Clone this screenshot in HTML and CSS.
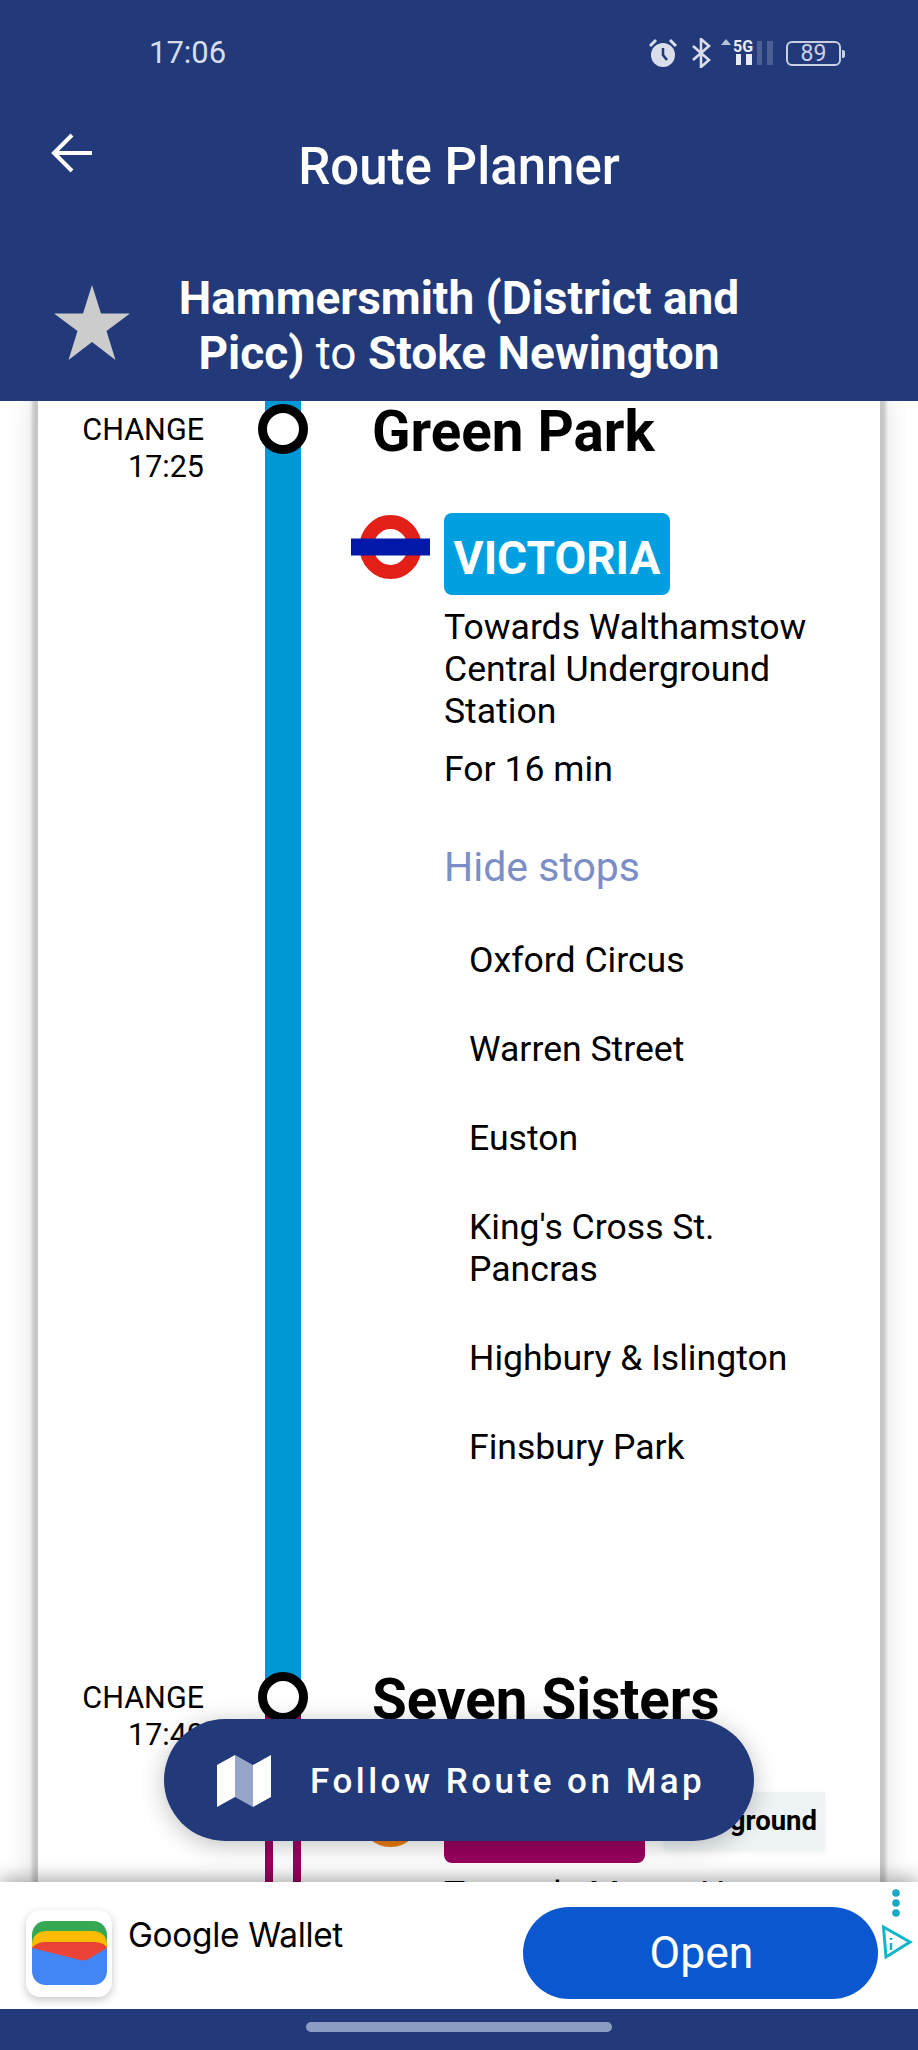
FILE: index.html
```html
<!DOCTYPE html>
<html lang="en">
<head>
<meta charset="utf-8">
<title>Route Planner</title>
<link rel="stylesheet" href="styles.css">
</head>
<body>
<div class="phone">
  <header class="header">
    <div class="status">
      <span class="clock">17:06</span>
      <div class="status-icons">
        <svg class="ic-alarm" viewBox="0 0 28 30" width="28" height="30"><path d="M1 8 7 2M27 8 21 2" stroke="#d9deea" stroke-width="3" fill="none"/><circle cx="14" cy="17" r="12" fill="#d9deea"/><path d="M14 10v7l4 5" stroke="#223a7a" stroke-width="2.5" fill="none"/></svg>
        <svg class="ic-bt" viewBox="0 0 20 30" width="20" height="30"><path d="M2 8 18 22 10 29V1L18 8 2 22" stroke="#d9deea" stroke-width="2.6" fill="none"/></svg>
        <svg class="ic-net" viewBox="0 0 54 28" width="54" height="28"><path d="M0 6 5 0 10 6Z" fill="#b9c3da"/><text x="12" y="13" class="net-label">5G</text><rect x="15" y="15" width="5" height="11" fill="#e8ebf3"/><rect x="25" y="15" width="6" height="11" fill="#e8ebf3"/><rect x="36" y="2" width="5" height="24" fill="#4c6096"/><rect x="46" y="2" width="6" height="24" fill="#4c6096"/></svg>
        <div class="battery"><span class="battery-level">89</span></div>
      </div>
    </div>
    <div class="toolbar">
      <svg class="back" viewBox="0 0 42 40" width="42" height="40"><path d="M41 20H3M21 2 3 20 21 38" stroke="#fff" stroke-width="4" fill="none"/></svg>
      <h1 class="title">Route Planner</h1>
    </div>
    <div class="route">
      <svg class="star" viewBox="0 0 76 75" width="76" height="75"><path d="M38 0 47 28.500H76L52.500 46 61.500 75 38 57 14.500 75 23.500 46 0 28.500H29Z" fill="#cccccc"/></svg>
      <p class="route-text"><b>Hammersmith (District and<br>Picc)</b> to <b>Stoke Newington</b></p>
    </div>
  </header>

  <main class="main">
    <div class="card">
      <div class="timeline">
        <div class="rail rail-victoria"></div>
        <div class="node node-one"></div>
        <div class="time time-one">CHANGE<br>17:25</div>
        <h2 class="stop-name name-one">Green Park</h2>

        <section class="leg leg-one">
          <div class="leg-head">
            <svg class="roundel" viewBox="0 0 79 64" width="79" height="64"><ellipse cx="39.500" cy="32" rx="24" ry="25" fill="none" stroke="#e32017" stroke-width="14"/><rect y="23.500" width="79" height="17" fill="#0019a8"/></svg>
            <span class="badge badge-victoria">VICTORIA</span>
          </div>
          <div class="leg-body">
            <p class="towards">Towards Walthamstow Central Underground Station</p>
            <p class="duration">For 16 min</p>
            <p class="hide-stops">Hide stops</p>
            <ul class="stops">
              <li>Oxford Circus</li>
              <li>Warren Street</li>
              <li>Euston</li>
              <li>King's Cross St. Pancras</li>
              <li>Highbury &amp; Islington</li>
              <li>Finsbury Park</li>
            </ul>
          </div>
        </section>

        <div class="rail rail-weaver"></div>
        <div class="node node-two"></div>
        <div class="time time-two">CHANGE<br>17:40</div>
        <h2 class="stop-name name-two">Seven Sisters</h2>

        <section class="leg leg-two">
          <div class="leg-head">
            <svg class="roundel" viewBox="0 0 79 64" width="79" height="64"><ellipse cx="39.500" cy="32" rx="24" ry="25" fill="none" stroke="#ee7c0e" stroke-width="14"/><rect y="23.500" width="79" height="17" fill="#0019a8"/></svg>
            <span class="badge badge-weaver">WEAVER</span>
            <span class="chip">Overground</span>
          </div>
          <div class="leg-body leg-body-two">
            <p class="towards">Towards Manor House</p>
          </div>
        </section>
      </div>
    </div>
    <button class="follow">
      <svg class="map-icon" viewBox="0 0 54 54" width="54" height="54"><path d="M0 12 18 2V44L0 54Z" fill="#fff"/><path d="M18 2 36 12V54L18 44Z" fill="#96a5c8"/><path d="M36 12 54 2V44L36 54Z" fill="#fff"/></svg>
      <span>Follow Route on Map</span>
    </button>
  </main>

  <aside class="ad">
    <div class="ad-tile">
      <svg viewBox="0 0 75 64" width="75" height="64">
        <path d="M0 14C0 6 6 0 14 0H61C69 0 75 6 75 14V30H0Z" fill="#34a853"/>
        <path d="M0 24C0 15 6 10 14 10H61C69 10 75 15 75 24V36H0Z" fill="#fbbc04"/>
        <path d="M0 27C4 22 9 21 14 21H61C68 21 73 23 75 27V40H0Z" fill="#ea4335"/>
        <path d="M0 27 48 39C52 40 55 39 58 37L75 27V50C75 58 69 64 61 64H14C6 64 0 58 0 50Z" fill="#4285f4"/>
      </svg>
    </div>
    <div class="ad-name">Google Wallet</div>
    <button class="ad-open">Open</button>
    <svg class="ad-marks" viewBox="0 0 36 76" width="36" height="76">
      <circle cx="14" cy="8" r="3.800" fill="#1ba8c4"/><circle cx="14" cy="18" r="3.800" fill="#1ba8c4"/><circle cx="14" cy="28" r="3.800" fill="#1ba8c4"/>
      <path d="M1.500 42 28 57 4 72Z" fill="none" stroke="#12b5cb" stroke-width="3"/><path d="M9 53v2M9 58v7" stroke="#12b5cb" stroke-width="2.500"/>
    </svg>
  </aside>

  <footer class="nav"><div class="home-bar"></div></footer>
</div>
</body>
</html>
```
FILE: styles.css
```css
* { box-sizing: border-box; }
html, body { margin: 0; padding: 0; background: #fff; }
body { font-family: Roboto, "Liberation Sans", sans-serif; color: #000; }
p, h1, h2, ul { margin: 0; padding: 0; }

.phone { width: 918px; height: 2050px; display: flex; flex-direction: column; overflow: hidden; }

/* Header */
.header { height: 401px; flex: none; background: #223a7a; color: #fff; position: relative; z-index: 3; }
.status { display: flex; justify-content: space-between; align-items: center; padding: 38px 77px 0 149px; height: 68px; }
.clock { font-size: 31px; color: #d8dde9; line-height: 32px; }
.status-icons { display: flex; align-items: center; }
.ic-alarm { margin-right: 14px; }
.ic-bt { margin-right: 10px; }
.ic-net { margin-right: 11px; overflow: visible; }
.net-label { font: 700 16px Roboto, sans-serif; fill: #e8ebf3; }
.battery { position: relative; width: 55px; height: 25px; border: 2px solid #c9d0e2; border-radius: 6px; display: flex; align-items: center; justify-content: center; }
.battery::after { content: ""; position: absolute; right: -6px; top: 7px; width: 3px; height: 8px; background: #c9d0e2; border-radius: 0 2px 2px 0; }
.battery-level { font-size: 23px; color: #c9d0e2; line-height: 21px; }

.toolbar { display: grid; grid-template-columns: 1fr auto 1fr; padding: 33px 0 0 0; height: 135px; }
.back { margin: 32px 0 0 51px; display: block; }
.title { grid-column: 2; font-size: 51px; font-weight: 500; line-height: 56px; padding-top: 38px; }
.route { display: grid; grid-template-columns: 132px 1fr; padding-top: 68px; }
.star { margin: 14px 0 0 54px; display: block; }
.route-text { font-size: 46px; line-height: 55px; text-align: center; width: 654px; }
.route-text b { font-weight: 700; }

/* Main */
.main { flex: 1; min-height: 0; position: relative; overflow: hidden; }
.card { margin: 0 38px; height: 100%; background: #fff; box-shadow: 0 0 3px 6px rgba(0, 0, 0, .17), 0 0 24px 8px rgba(0, 0, 0, .1); }
.timeline { display: grid; grid-template-columns: 166px 54px 50px 43px 1fr; grid-template-rows: 80px 1191px 80px auto; }
.rail { grid-column: 3; justify-self: center; width: 36px; }
.rail-victoria { grid-row: 1 / 3; background: #0098d4; margin-bottom: -25px; }
.rail-weaver { grid-row: 3 / 5; margin-top: 25px; border-left: 8px solid #97015e; border-right: 8px solid #97015e; }
.node { grid-column: 3; width: 50px; height: 50px; border: 9px solid #000; border-radius: 50%; background: #fff; z-index: 1; }
.node-one { grid-row: 1; margin-top: 3px; }
.node-two { grid-row: 3; }
.time { grid-column: 1; text-align: right; font-size: 30.500px; line-height: 37px; }
.time-one { grid-row: 1; margin-top: 10px; }
.time-two { grid-row: 3; margin-top: 7px; }
.stop-name { grid-column: 4 / 6; padding-left: 64px; font-size: 56.500px; font-weight: 700; line-height: 62px; }
.name-one { grid-row: 1; }
.name-two { grid-row: 3; margin-top: -3px; }
.leg { grid-column: 5; }
.leg-one { grid-row: 2; padding-top: 32px; }
.leg-two { grid-row: 4; padding-top: 29px; }
.leg-head { display: flex; gap: 14px; align-items: flex-start; }
.roundel { display: block; margin-top: 2px; flex: none; }
.badge { display: block; height: 82px; border-radius: 8px; color: #fff; font-size: 46px; font-weight: 700; line-height: 90px; text-align: center; }
.badge-victoria { width: 226px; background: #009fe0; }
.badge-weaver { width: 201px; background: #97015e; line-height: 74px; }
.chip { flex: none; width: 161px; text-align: right; background: #eef3f6; font-size: 27.500px; font-weight: 700; height: 58px; line-height: 58px; padding-right: 8px; margin: 11px 0 0 5px; box-shadow: 0 2px 6px rgba(0, 0, 0, .06); }
.leg-body { padding-left: 93px; width: 480px; padding-top: 11px; }
.leg-body-two { padding-top: 10px; }
.towards { font-size: 35.600px; line-height: 42px; }
.duration { font-size: 35.600px; line-height: 42px; margin-top: 16px; }
.hide-stops { font-size: 41px; line-height: 44px; color: #7b8ec6; margin-top: 55px; }
.stops { list-style: none; padding: 50px 0 0 25px; }
.stops li { font-size: 35.600px; line-height: 42px; margin-bottom: 47px; }

.follow { position: absolute; left: 164px; bottom: 41px; width: 590px; height: 122px; border: 0; border-radius: 61px; background: #223a7a; color: #fff; display: flex; align-items: center; padding: 3px 0 0 53px; font-family: Roboto, sans-serif; font-size: 35px; font-weight: 500; letter-spacing: 3.500px; box-shadow: 0 4px 24px rgba(0, 0, 0, .25); z-index: 2; }
.map-icon { margin: -3px 39px 0 0; flex: none; }

/* Ad */
.ad { height: 127px; flex: none; background: #fff; display: flex; align-items: flex-start; padding-left: 26px; position: relative; z-index: 1; box-shadow: 0 -5px 16px rgba(0, 0, 0, .3); }
.ad-tile { width: 86px; height: 87px; margin-top: 28px; background: #fff; border-radius: 14px; box-shadow: 0 3px 8px rgba(0, 0, 0, .22); display: flex; align-items: flex-start; justify-content: center; padding-top: 11px; flex: none; }
.ad-tile svg { display: block; }
.ad-name { margin: 33px 0 0 16px; width: 395px; font-size: 33.400px; line-height: 40px; font-family: Inter, Roboto, sans-serif; letter-spacing: -0.3px; }
.ad-open { width: 355px; height: 92px; margin-top: 25px; flex: none; border: 0; border-radius: 46px; background: #0b57d0; color: #fff; font-family: Roboto, sans-serif; font-size: 44.500px; padding: 0 0 0 2px; }
.ad-marks { display: block; margin: 3px 0 0 4px; flex: none; }

.nav { height: 41px; flex: none; background: #223a7a; display: flex; justify-content: center; padding-top: 13px; position: relative; z-index: 1; }
.home-bar { width: 306px; height: 10px; border-radius: 5px; background: #8c9dc4; }
```
